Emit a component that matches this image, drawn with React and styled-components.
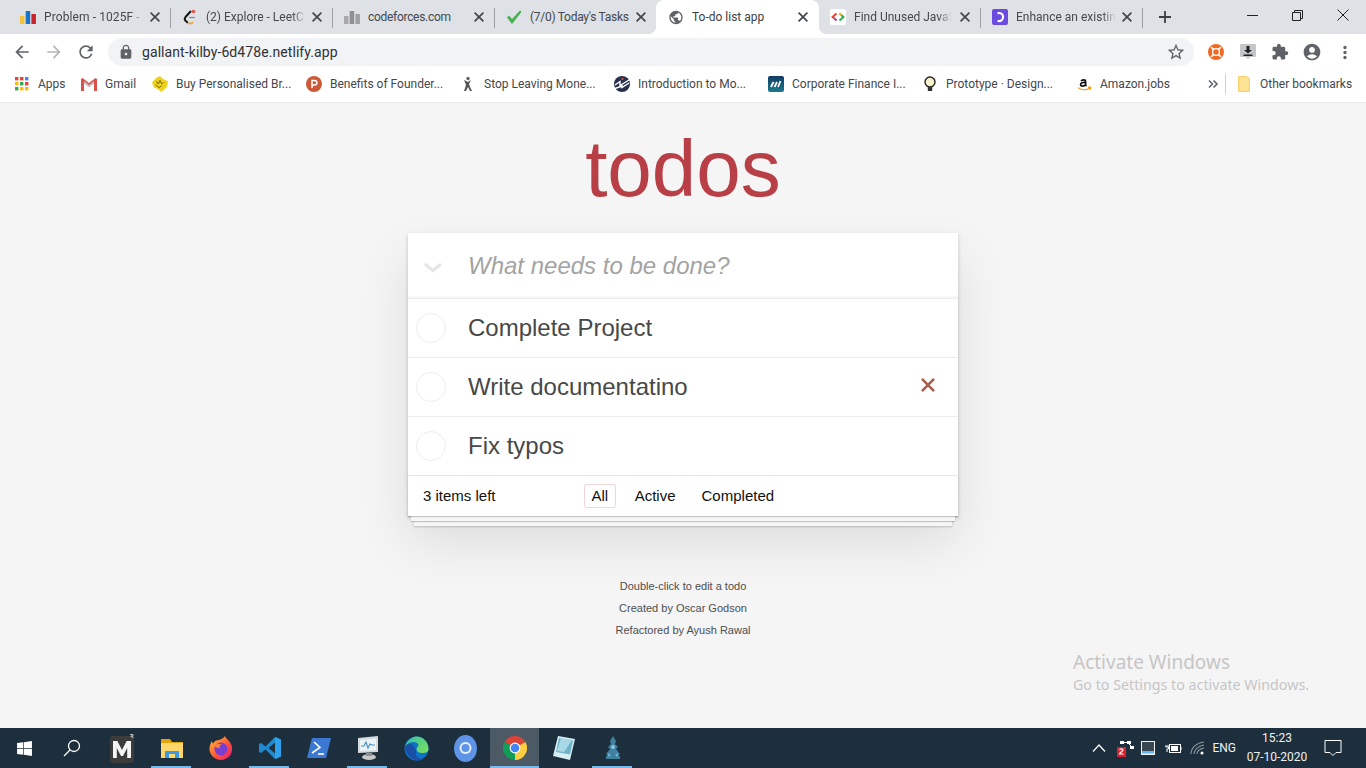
import React from "react";
import styled, { createGlobalStyle } from "styled-components";
import { MdArrowBack, MdArrowForward, MdRefresh, MdLock, MdStarBorder, MdExtension, MdAccountCircle, MdMoreVert, MdPublic } from "react-icons/md";
import { FaWindows } from "react-icons/fa";

const Global = createGlobalStyle`
  html, body { margin: 0; padding: 0; height: 100%; overflow: hidden; }
  body { font-family: "Liberation Sans", Arial, sans-serif; background: #f5f5f5; }
  * { box-sizing: border-box; }
`;

const Screen = styled.div`
  width: 1366px; height: 768px; display: flex; flex-direction: column; overflow: hidden; position: relative;
`;
const Chrome = styled.header`
  flex: none; height: 103px; background: #fff; display: flex; flex-direction: column;
  font-family: Roboto, "Noto Sans", sans-serif;
`;
const TabBar = styled.div`
  height: 34px; background: #dee1e6; display: flex; align-items: stretch; padding-left: 9px;
`;
const Tab = styled.div`
  width: ${p => p.$active ? 163 : 161}px; flex: none; display: flex; align-items: center; padding-left: ${p => p.$active ? 12 : 11}px; position: relative;
  background: ${p => p.$active ? "#fff" : "transparent"};
  border-radius: 8px 8px 0 0;
  color: ${p => p.$active ? "#3c4043" : "#45484c"};
  ${p => p.$active ? `
    margin-left: -1px; margin-right: -1px;
    &::before, &::after { content: ""; position: absolute; bottom: 0; width: 8px; height: 8px; }
    &::before { left: -8px; background: radial-gradient(circle at 0 0, #dee1e6 8px, #fff 8.5px); }
    &::after { right: -8px; background: radial-gradient(circle at 100% 0, #dee1e6 8px, #fff 8.5px); }
  ` : ""}
`;
const TabSep = styled.div`
  width: 1px; flex: none; margin: 8px 0 6px; background: ${p => p.$hidden ? "transparent" : "#9da0a5"};
`;
const Fav = styled.span`
  width: 16px; height: 16px; flex: none; display: flex; align-items: center; justify-content: center;
`;
const TabTitle = styled.span`
  margin-left: 8px; width: 102px; flex: none; overflow: hidden; white-space: nowrap; font-size: 12px; line-height: 16px;
  letter-spacing: ${p => p.$track || 0}px;
  ${p => p.$fade ? `
  -webkit-mask-image: linear-gradient(90deg, #000 ${p.$fade - 14}px, transparent ${p.$fade}px);
  mask-image: linear-gradient(90deg, #000 ${p.$fade - 14}px, transparent ${p.$fade}px);` : ""}
`;
const TabClose = styled.span`
  width: 16px; height: 16px; flex: none; display: flex; margin-left: 1px; color: #44474a;
`;
const NewTab = styled.span`
  width: 20px; height: 20px; margin: 7px 0 0 12px; flex: none; color: #3c4043; display: flex;
`;
const WinControls = styled.div`
  margin-left: auto; display: flex; height: 30px; color: #222;
`;
const WinBtn = styled.span`
  width: 45px; height: 30px; display: flex; align-items: center; justify-content: center;
  &:last-child { width: 46px; }
`;
const Toolbar = styled.div`
  height: 36px; display: flex; align-items: center; padding: 0 0 0 12px; color: #5f6368;
`;
const NavBtn = styled.span`
  width: 20px; height: 20px; margin-right: 12px; display: flex; flex: none; color: ${p => p.$dim ? "#b4b6b9" : "#5f6368"};
  svg { width: 20px; height: 20px; }
`;
const Omnibox = styled.div`
  width: 1086px; height: 28px; flex: none; border-radius: 14px; background: #f1f3f4; display: flex; align-items: center;
  padding: 0 8px 0 10px; font-size: 14px; letter-spacing: .08px; color: #2f3134;
`;
const LockSlot = styled.span`
  width: 16px; height: 16px; display: flex; color: #5f6368; margin-right: 8px; svg { width: 16px; height: 16px; }
`;
const Url = styled.span` flex: 1; white-space: nowrap; `;
const StarSlot = styled.span` width: 20px; height: 20px; display: flex; color: #5f6368; svg { width: 20px; height: 20px; } `;
const ExtSlot = styled.span`
  width: 20px; height: 20px; flex: none; display: flex; align-items: center; justify-content: center; color: #5f6368;
  margin-left: ${p => p.$ml}px;
`;
const Bookmarks = styled.div`
  height: 33px; display: flex; align-items: center; padding: 0 0 4px 14px; border-bottom: 1px solid #e8e8e8;
  font-size: 12px; color: #44474b;
`;
const Bookmark = styled.div`
  width: ${p => p.$w}px; flex: none; display: flex; align-items: center; gap: 8px; white-space: nowrap;
`;
const BmIcon = styled.span`
  width: 16px; height: 16px; flex: none; display: flex; align-items: center; justify-content: center;
`;
const Chevrons = styled.span`
  width: 14px; height: 10px; flex: none; margin-left: 9px; color: #5f6368; display: flex;
`;
const BmSep = styled.span`
  width: 1px; height: 20px; flex: none; background: #d0d2d5; margin: 0 10px 0 5px;
`;

const Main = styled.main`
  flex: 1; min-height: 0; background: #f5f5f5; display: flex; flex-direction: column; align-items: center; position: relative;
`;
const Title = styled.h1`
  margin: 16px 0 0; height: 114px; font-size: 80px; line-height: 100px; font-weight: 400; color: #b83f45; text-align: center;
  font-family: "Liberation Sans", Arial, sans-serif;
`;
const Card = styled.section`
  width: 550px; background: #fff; box-shadow: 0 2px 4px 0 rgba(0,0,0,.2), 0 25px 50px 0 rgba(0,0,0,.1); display: flex; flex-direction: column;
`;
const InputRow = styled.div`
  height: 65px; display: flex; align-items: center; box-shadow: inset 0 -2px 1px rgba(0,0,0,.03);
`;
const ToggleAll = styled.span`
  width: 60px; flex: none; display: flex; justify-content: center; padding: 5px 10px 0 0;
`;
const Placeholder = styled.span`
  font-size: 24px; font-style: italic; color: #a3a3a3; margin-top: 1px;
`;
const Row = styled.div`
  height: 59px; display: flex; align-items: center; border-top: 1px solid #ededed; position: relative;
  &:first-of-type { border-top: 1px solid #e6e6e6; }
`;
const Check = styled.span`
  width: 30px; height: 30px; flex: none; margin-left: 8px; border-radius: 50%; border: 1px solid #ededed;
`;
const RowText = styled.span`
  font-size: 24px; color: #484848; margin-left: 22px; flex: 1;
`;
const Destroy = styled.span`
  width: 22px; height: 22px; flex: none; margin: -5px 19px 0 0; display: flex;
`;
const Foot = styled.footer`
  height: 41px; display: flex; align-items: center; padding: 0 0 0 15px; border-top: 1px solid #e6e6e6;
  font-size: 15px; color: #111; position: relative;
  box-shadow: 0 1px 1px rgba(0,0,0,.2), 0 8px 0 -3px #f6f6f6, 0 9px 1px -3px rgba(0,0,0,.2), 0 16px 0 -6px #f6f6f6, 0 17px 2px -6px rgba(0,0,0,.2);
`;
const Count = styled.span` width: 161px; flex: none; line-height: 22px; margin-top: -1px; `;
const FilterList = styled.div` display: flex; gap: 10px; `;
const Filter = styled.span`
  height: 24px; padding: 0 ${p => p.$on ? 6.5 : 7}px; margin-right: ${p => p.$on ? 1 : 0}px; line-height: 22px; border-radius: 3px; border: 1px solid ${p => p.$on ? "rgba(184,63,69,.22)" : "transparent"};
  color: #111;
`;
const Info = styled.div`
  margin-top: 59px; font-size: 11px; line-height: 22px; color: #4d4d4d; text-align: center;
`;
const Watermark = styled.div`
  position: absolute; left: 1073px; top: 546px; color: #c6c6c6; font-family: "Noto Sans", sans-serif; font-size: 14.25px; line-height: 20px;
`;
const WmTitle = styled.div` font-size: 19px; line-height: 26px; `;

const Taskbar = styled.footer`
  flex: none; height: 40px; background: #1d2f3c; display: flex; align-items: stretch; color: #fff; font-family: Roboto, "Noto Sans", sans-serif;
`;
const TbStart = styled.span` width: 48px; flex: none; display: flex; align-items: center; justify-content: center; svg { width: 17px; height: 17px; } `;
const TbSearch = styled(TbStart)` svg { width: 20px; height: 20px; } `;
const TbApps = styled.div` display: flex; margin-left: 2px; `;
const TbItem = styled.span`
  width: 49px; flex: none; display: flex; align-items: center; justify-content: center; position: relative;
  background: ${p => p.$active ? "#4b5a64" : "transparent"};
  ${p => (p.$open || p.$active) ? `&::after { content: ""; position: absolute; bottom: 0; height: 2px; left: ${p.$active ? 0 : 4}px; right: ${p.$active ? 0 : 5}px; background: #76b9ed; }` : ""}
`;
const Tray = styled.div`
  margin-left: auto; display: flex; align-items: center; font-size: 12px; color: #f0f0f0;
`;
const TrayIcon = styled.span` width: 20px; height: 20px; flex: none; margin-right: ${p => p.$mr ?? 5}px; display: flex; align-items: center; justify-content: center; `;
const Eng = styled.span` margin: 0 6px 0 -1px; `;
const Clock = styled.div` width: 70px; text-align: center; line-height: 19px; font-size: 12px; margin-right: 2px; `;
const Notify = styled.span` width: 48px; display: flex; justify-content: center; margin-right: 9px; margin-left: -5px;`;

const X = ({ s = 16, w = 1.7, c = "currentColor" }) => (
  <svg width={s} height={s} viewBox="0 0 16 16"><path d="M3.6 3.6l8.8 8.8M12.4 3.6l-8.8 8.8" stroke={c} strokeWidth={w} fill="none" /></svg>
);

const BarsFav = ({ colors }) => (
  <svg width="16" height="16" viewBox="0 0 16 16">
    <rect x="0" y="7" width="4.5" height="8" fill={colors[0]} />
    <rect x="5.7" y="2" width="4.5" height="13" fill={colors[1]} />
    <rect x="11.4" y="5" width="4.5" height="10" fill={colors[2]} />
  </svg>
);
const LeetFav = () => (
  <svg width="16" height="16" viewBox="0 0 16 16" fill="none">
    <path d="M9 2L3.500 8c-1 1.200-.8 3 .3 4l2 1.700" stroke="#111" strokeWidth="1.900" />
    <path d="M6 13.900c1.600.9 3.600.9 5.200-.5" stroke="#e9a33b" strokeWidth="1.800" />
    <path d="M7 8.500h6" stroke="#888" strokeWidth="1.200" />
    <circle cx="11.500" cy="2.500" r="1.800" fill="#e0574a" />
  </svg>
);
const CheckFav = () => (
  <svg width="16" height="16" viewBox="0 0 16 16"><path d="M1 8.500l2-2 3 3.500L14 1.500l1.500 1.500L6 15z" fill="#4caf50" /></svg>
);
const CodeFav = () => (
  <svg width="16" height="16" viewBox="0 0 16 16">
    <rect width="16" height="16" rx="2" fill="#fff" />
    <path d="M6.500 4.600L2.600 8l3.900 3.400" fill="none" stroke="#ea4335" strokeWidth="2" />
    <path d="M4.600 9.600l1.900 1.800" fill="none" stroke="#4285f4" strokeWidth="2" />
    <path d="M9.500 4.600L13.400 8l-3.900 3.400" fill="none" stroke="#34a853" strokeWidth="2" />
    <path d="M11.400 6.400L9.500 4.600" fill="none" stroke="#fbbc05" strokeWidth="2" />
  </svg>
);
const PurpleFav = () => (
  <svg width="16" height="16" viewBox="0 0 16 16">
    <rect width="16" height="16" rx="2" fill="#6c4ce0" />
    <path d="M5.500 4.200c3-.8 5.600.8 5.600 3.800s-2.600 4.700-5.600 3.800" fill="none" stroke="#fff" strokeWidth="2.200" />
  </svg>
);
const GridApps = () => (
  <svg width="14" height="14" viewBox="0 0 14 14">
    {[["#ea4335","#ea4335","#4285f4"],["#fbbc05","#34a853","#ea4335"],["#34a853","#fbbc05","#fbbc05"]].map((r, i) =>
      r.map((c, j) => <rect key={`${i}${j}`} x={j * 5} y={i * 5} width="3.4" height="3.4" fill={c} />))}
  </svg>
);
const GmailIcon = () => (
  <svg width="16" height="13" viewBox="0 0 16 13">
    <path d="M0 1v12h3V5l5 4 5-4v8h3V1l-1.500-1L8 5 1.500 0z" fill="#d9534a" />
    <path d="M3 5l5 4 5-4V3L8 7 3 3z" fill="#c4c4c4" />
  </svg>
);
const BuyIcon = () => (
  <svg width="16" height="16" viewBox="0 0 18 18">
    <path d="M0 7l5-5 4-2 3 3 6 3-1 6-4 4-3 2-3-3-5-2z" fill="#eed21f" />
    <path d="M5 6l2 3 2-4 2 4 2-2M4 10l4 3 3-2" stroke="#6d5a10" strokeWidth="1" fill="none" />
  </svg>
);
const PIcon = () => (
  <svg width="16" height="16" viewBox="0 0 16 16">
    <circle cx="8" cy="8" r="8" fill="#cc5a37" />
    <path d="M6 12V4.500h2.600a2.200 2.200 0 010 4.600H6" fill="none" stroke="#fff" strokeWidth="1.500" />
  </svg>
);
const StopIcon = () => (
  <svg width="14" height="16" viewBox="0 0 14 16">
    <circle cx="7" cy="2.500" r="1.700" fill="#666" />
    <path d="M3 4l4 2 3-2-2 4 1 3 2 4h-2l-2-4-2 4H3l2-6z" fill="#555" />
  </svg>
);
const IntroIcon = () => (
  <svg width="16" height="16" viewBox="0 0 16 16">
    <circle cx="8" cy="8" r="8" fill="#27304f" />
    <path d="M1 9l5-3.500v4L15 4M1 12.500l7-2.500v1.500L15 7" stroke="#fff" strokeWidth="1.400" fill="none" />
    <circle cx="8.500" cy="3" r="1" fill="#e0574a" />
  </svg>
);
const CorpIcon = () => (
  <svg width="16" height="16" viewBox="0 0 16 16">
    <defs><linearGradient id="corp" x1="0" y1="0" x2="0" y2="1"><stop offset="0" stopColor="#123a63" /><stop offset="1" stopColor="#1b7a8c" /></linearGradient></defs>
    <rect width="16" height="16" rx="2" fill="url(#corp)" />
    <path d="M3 11l2.500-5M6.500 11L9 6M10 11l2.500-6" stroke="#fff" strokeWidth="1.800" />
  </svg>
);
const BulbIcon = () => (
  <svg width="14" height="16" viewBox="0 0 14 16">
    <circle cx="7" cy="6" r="5" fill="#f7f3cf" stroke="#222" strokeWidth="1.400" />
    <rect x="4.800" y="11" width="4.400" height="4" fill="#333" />
  </svg>
);
const AmazonIcon = () => (
  <svg width="15" height="16" viewBox="0 0 15 16">
    <path d="M8.600 9.600V5.200c0-1.700-3.600-2-4.500 0M8.600 6.400c-3-.2-5 .6-5 2.200 0 1.800 3.700 2.100 5-.3M8.600 8.600c0 .8.500 1.200 1 1.400" fill="none" stroke="#111" strokeWidth="1.700" />
    <path d="M1 11.600c3.600 2.800 8.600 2.800 12 .4M11 11.400l2.600-.2-.4 2.600" fill="none" stroke="#f90" strokeWidth="1.200" />
  </svg>
);
const FolderIcon = () => (
  <svg width="12" height="16" viewBox="0 0 12 16"><path d="M.5.500h8l3 2v13H.5z" fill="#fde293" stroke="#f4cf6b" /></svg>
);
const LifeRing = () => (
  <svg width="16" height="16" viewBox="0 0 16 16">
    <circle cx="8" cy="8" r="8" fill="#ee6a24" />
    <circle cx="8" cy="8" r="3.400" fill="none" stroke="#fff" strokeWidth="1.300" />
    <path d="M3 3l2.600 2.600M13 3l-2.600 2.600M3 13l2.600-2.600M13 13l-2.600-2.600" stroke="#fff" strokeWidth="1.500" />
  </svg>
);
const DownloadExt = () => (
  <svg width="18" height="18" viewBox="0 0 18 18">
    <rect x="1" y="1" width="16" height="13" rx="1" fill="#c4c6c8" />
    <path d="M7.500 3h3v4h2.500L9 10.500 5 7h2.500zM4.500 11.500h9v1.400h-9z" fill="#222" />
    <path d="M7 14h4l-2 2.500z" fill="#c4c6c8" />
  </svg>
);
const ChevronDown = () => (
  <svg width="20" height="12" viewBox="0 0 20 12"><path d="M2 2l8 6.500L18 2" fill="none" stroke="#e6e6e6" strokeWidth="3" /></svg>
);

const tbIcons = {
  m: <svg width="25" height="32" viewBox="0 0 25 32"><rect y="4" width="24" height="27" rx="3" fill="#3c3c3c" /><path d="M3 26V9h4.400L12 18l4.600-9H21v17h-3.800V16l-4.200 8h-2L6.800 16v10z" fill="#f4f4f4" /><path d="M20 2.500h3v1.400h-2v1h2V6" stroke="#ddd" strokeWidth=".8" fill="none" /></svg>,
  folder: <svg width="24" height="24" viewBox="0 0 24 24"><path d="M1 3h9l2 3h11v4H1z" fill="#e5a50a" /><path d="M1 7h22v15H1z" fill="#ffd76a" /><rect x="5" y="15" width="14" height="7" fill="#3d9ae0" /><rect x="9" y="18" width="6" height="4" fill="#ffd76a" /></svg>,
  firefox: <svg width="24" height="26" viewBox="0 0 24 26"><defs><linearGradient id="ff" x1="0" y1="0" x2="1" y2="1"><stop offset="0" stopColor="#ffc13a" /><stop offset=".55" stopColor="#ff5634" /><stop offset="1" stopColor="#e31587" /></linearGradient></defs><path d="M16 1c1 3 6 5 7 11 1 8-5 13-11 13S0 20 .5 13C1 10 2 7 3 6c0 1 .5 2 1 2.500C5 6 8 5 10 5c2-1 5-2 6-4z" fill="url(#ff)" /><circle cx="12" cy="14" r="6.500" fill="#7b3fd0" /><path d="M5 11c2-2 6-3 8-1-3 0-3 2-2 3-3 0-4-1-6-2z" fill="#ff8a2a" /></svg>,
  vscode: <svg width="24" height="24" viewBox="0 0 24 24"><path d="M17 1L7.500 10.500 3 7 1 8v8l2 1 4.500-3.500L17 23l6-2.500v-17z" fill="#1f8ad2" /><path d="M17 6.500L10.500 12 17 17.500z" fill="#1d2f3c" /><path d="M17 1l6 2.500v17L17 23z" fill="#2da1ec" /></svg>,
  ps: <svg width="24" height="22" viewBox="0 0 24 22"><path d="M5 1h19l-5 20H0z" fill="#3b78d4" /><path d="M7 5l6 5.500-8 5.500" fill="none" stroke="#fff" strokeWidth="1.600" /><path d="M11 17h6" stroke="#fff" strokeWidth="1.600" /></svg>,
  monitor: <svg width="24" height="26" viewBox="0 0 24 26"><path d="M2 3l20-2v16L2 18z" fill="#d6dadd" /><path d="M4 5l16-1.500v11.500L4 16z" fill="#eaf3f7" /><path d="M5 11h3l2-4 2 6 2-4 2 1h3" fill="none" stroke="#4a93c4" strokeWidth="1.200" /><ellipse cx="13" cy="22" rx="7" ry="3" fill="#c9c9c9" /><rect x="10" y="18" width="6" height="3" fill="#8f8f8f" /></svg>,
  edge: <svg width="25" height="25" viewBox="0 0 25 25"><defs><linearGradient id="ed" x1="0" y1="0" x2="1" y2="1"><stop offset="0" stopColor="#35c1a0" /><stop offset="1" stopColor="#7fe05f" /></linearGradient></defs><circle cx="12.500" cy="12.500" r="12" fill="#0c74c6" /><path d="M1 11C3 3 10 .5 12.500.5 19 .5 24.500 6 24.500 13c0 3-3 4-6 4-4 0-6-1.500-6-4 0-2 2-2.500 2-4 0-2-3-3.500-6-3C5 6.500 2.500 8 1 11z" fill="url(#ed)" /><path d="M1 11c1 8 7 13.500 13 13.500 2 0 4-.5 5.500-2-6 1-8.500-3-7.500-8C9 6 3 7 1 11z" fill="#1a4fa8" /></svg>,
  chromium: <svg width="23" height="27" viewBox="0 0 23 27"><ellipse cx="11.500" cy="13.500" rx="11.500" ry="13.500" fill="#5f93e6" /><circle cx="11.500" cy="13" r="6" fill="#e8eefb" /><circle cx="11.500" cy="13" r="4" fill="#5f93e6" /></svg>,
  chrome: <svg width="24" height="24" viewBox="0 0 24 24"><path d="M12 12L1.600 6A12 12 0 0122.400 6z" fill="#db4437" /><path d="M12 12L1.600 6A12 12 0 0012 24z" fill="#0f9d58" /><path d="M12 12L22.400 6A12 12 0 0112 24z" fill="#ffcd40" /><circle cx="12" cy="12" r="5.400" fill="#fff" /><circle cx="12" cy="12" r="4.300" fill="#4285f4" /></svg>,
  notepad: <svg width="24" height="26" viewBox="0 0 24 26"><path d="M6 1l17 3-5 21L1 21z" fill="#d7eef5" /><path d="M7 3l14 2.500-3 14L4 17z" fill="#6fb3c8" /><path d="M9 3l11 2-8 12-7-1z" fill="#a9d8e6" /></svg>,
  tara: <svg width="18" height="26" viewBox="0 0 18 26"><path d="M9 1l3 5-1 3 3 3-2 2 4 5-3 2h3v3H2v-3h3l-3-2 4-5-2-2 3-3-1-3z" fill="#3f7f9f" /><circle cx="9" cy="12" r="2" fill="#8cc6dd" /><circle cx="5" cy="20" r="1.500" fill="#6db2cf" /><circle cx="13" cy="20" r="1.500" fill="#6db2cf" /></svg>,
};

const tabs = [
  { t: "Problem - 1025F -", fade: 100, track: .1, i: <BarsFav colors={["#f5c33b", "#1a73c8", "#c7242c"]} /> },
  { t: "(2) Explore - LeetC", fade: 100, i: <LeetFav /> },
  { t: "codeforces.com", track: -.3, i: <BarsFav colors={["#a8a8a8", "#909090", "#a0a0a0"]} /> },
  { t: "(7/0) Today's Tasks", track: -.28, i: <CheckFav /> },
  { t: "To-do list app", i: <MdPublic size={19} color="#5f6368" />, active: true },
  { t: "Find Unused JavaS", fade: 98, i: <CodeFav /> },
  { t: "Enhance an existin", fade: 100, i: <PurpleFav /> },
];
const bookmarks = [
  { t: "Apps", w: 67, i: <GridApps /> },
  { t: "Gmail", w: 71, i: <GmailIcon /> },
  { t: "Buy Personalised Br...", w: 154, i: <BuyIcon /> },
  { t: "Benefits of Founder...", w: 154, i: <PIcon /> },
  { t: "Stop Leaving Mone...", w: 154, i: <StopIcon /> },
  { t: "Introduction to Mo...", w: 154, i: <IntroIcon /> },
  { t: "Corporate Finance I...", w: 154, i: <CorpIcon /> },
  { t: "Prototype · Design...", w: 154, i: <BulbIcon /> },
  { t: "Amazon.jobs", w: 121, i: <AmazonIcon /> },
];
const apps = [
  ["m"], ["folder", "open"], ["firefox"], ["vscode", "open"], ["ps"], ["monitor", "open"],
  ["edge"], ["chromium"], ["chrome", "active"], ["notepad"], ["tara", "open"],
];

export default function App() {
  return (
    <Screen>
      <Global />
      <Chrome>
        <TabBar>
          {tabs.map((t, i) => (
            <React.Fragment key={t.t}>
              <Tab $active={t.active}>
                <Fav>{t.i}</Fav>
                <TabTitle $fade={t.fade} $track={t.track}>{t.t}</TabTitle>
                <TabClose><X /></TabClose>
              </Tab>
              <TabSep $hidden={t.active || tabs[i + 1]?.active} />
            </React.Fragment>
          ))}
          <NewTab><svg width="20" height="20" viewBox="0 0 20 20"><path d="M10 4v12M4 10h12" stroke="currentColor" strokeWidth="1.800" /></svg></NewTab>
          <WinControls>
            <WinBtn><svg width="11" height="11" viewBox="0 0 11 11"><path d="M0 5.500h11" stroke="currentColor" /></svg></WinBtn>
            <WinBtn><svg width="11" height="11" viewBox="0 0 11 11" fill="none" stroke="currentColor"><path d="M.5 2.500h8v8h-8zM2.500 2.500v-2h8v8h-2" /></svg></WinBtn>
            <WinBtn><svg width="12" height="12" viewBox="0 0 12 12"><path d="M.5.5l11 11M11.500.5l-11 11" stroke="currentColor" /></svg></WinBtn>
          </WinControls>
        </TabBar>
        <Toolbar>
          <NavBtn><MdArrowBack /></NavBtn>
          <NavBtn $dim><MdArrowForward /></NavBtn>
          <NavBtn><MdRefresh /></NavBtn>
          <Omnibox>
            <LockSlot><MdLock /></LockSlot>
            <Url>gallant-kilby-6d478e.netlify.app</Url>
            <StarSlot><MdStarBorder /></StarSlot>
          </Omnibox>
          <ExtSlot $ml={12}><LifeRing /></ExtSlot>
          <ExtSlot $ml={12}><DownloadExt /></ExtSlot>
          <ExtSlot $ml={12}><MdExtension size={18} /></ExtSlot>
          <ExtSlot $ml={12}><MdAccountCircle size={24} /></ExtSlot>
          <ExtSlot $ml={13}><MdMoreVert size={21} /></ExtSlot>
        </Toolbar>
        <Bookmarks>
          {bookmarks.map(b => (
            <Bookmark key={b.t} $w={b.w}><BmIcon>{b.i}</BmIcon>{b.t}</Bookmark>
          ))}
          <Chevrons><svg width="14" height="10" viewBox="0 0 14 10" fill="none" stroke="currentColor" strokeWidth="1.500"><path d="M3 1.500L6.500 5 3 8.500M7.500 1.500L11 5 7.500 8.500" /></svg></Chevrons>
          <BmSep />
          <Bookmark $w={130}><BmIcon><FolderIcon /></BmIcon>Other bookmarks</Bookmark>
        </Bookmarks>
      </Chrome>
      <Main>
        <Title>todos</Title>
        <Card>
          <InputRow>
            <ToggleAll><ChevronDown /></ToggleAll>
            <Placeholder>What needs to be done?</Placeholder>
          </InputRow>
          <Row><Check /><RowText>Complete Project</RowText></Row>
          <Row><Check /><RowText>Write documentatino</RowText><Destroy><X s={22} w={1.9} c="#a65d50" /></Destroy></Row>
          <Row><Check /><RowText>Fix typos</RowText></Row>
          <Foot>
            <Count>3 items left</Count>
            <FilterList>
              <Filter $on>All</Filter>
              <Filter>Active</Filter>
              <Filter>Completed</Filter>
            </FilterList>
          </Foot>
        </Card>
        <Info>
          <div>Double-click to edit a todo</div>
          <div>Created by Oscar Godson</div>
          <div>Refactored by Ayush Rawal</div>
        </Info>
        <Watermark>
          <WmTitle>Activate Windows</WmTitle>
          Go to Settings to activate Windows.
        </Watermark>
      </Main>
      <Taskbar>
        <TbStart><FaWindows /></TbStart>
        <TbSearch><svg viewBox="0 0 20 20" fill="none" stroke="#fff" strokeWidth="1.300"><circle cx="12" cy="8" r="5.500" /><path d="M8 12l-6 6" /></svg></TbSearch>
        <TbApps>
          {apps.map(([k, st]) => (
            <TbItem key={k} $open={st === "open"} $active={st === "active"}>{tbIcons[k]}</TbItem>
          ))}
        </TbApps>
        <Tray>
          <TrayIcon $mr={7}><svg width="14" height="8" viewBox="0 0 14 8"><path d="M1 7.500L7 1l6 6.500" fill="none" stroke="#fff" strokeWidth="1.200" /></svg></TrayIcon>
          <TrayIcon $mr={2}>
            <svg width="18" height="18" viewBox="0 0 18 18"><path d="M3 2h4v3H3zM10 2h4v3h-4zM13 7h4v3h-4z" fill="#fff" /><path d="M7 3.500h3M12 5l2 2" stroke="#fff" /><rect y="8" width="9" height="10" fill="#d8202f" /><path d="M2.500 11c.5-1.500 3.500-1.500 3.500 0 0 1.500-3 2-3.500 4h4" fill="none" stroke="#fff" strokeWidth="1.200" /></svg>
          </TrayIcon>
          <TrayIcon><svg width="14" height="14" viewBox="0 0 14 14"><rect width="14" height="14" fill="#f3f3f3" /><rect x="1" y="1" width="12" height="9" fill="#3a4650" /><rect x="1" y="10" width="12" height="2.500" fill="#63b6f0" /></svg></TrayIcon>
          <TrayIcon><svg width="17" height="11" viewBox="0 0 17 11" fill="none" stroke="#fff"><rect x="4.500" y="1.500" width="11" height="8" /><rect x="6" y="3" width="7" height="5" fill="#fff" stroke="none" /><path d="M16 4v3M1 2v2M3 2v2M.5 4h3v2H2v3" /></svg></TrayIcon>
          <TrayIcon><svg width="16" height="14" viewBox="0 0 16 14" fill="none" stroke="#8c969d" strokeWidth="1.100"><path d="M1 13C1 7 6 2 14 1M4 13c0-4 4-8 10-9M7 13c0-3 3-5 7-6" /><circle cx="12" cy="12" r="1.500" fill="#fff" stroke="none" /></svg></TrayIcon>
          <Eng>ENG</Eng>
          <Clock><div>15:23</div><div>07-10-2020</div></Clock>
          <Notify><svg width="18" height="16" viewBox="0 0 18 16" fill="none" stroke="#fff"><path d="M1 .5h16v12h-5l-3 3-3-3H1z" /></svg></Notify>
        </Tray>
      </Taskbar>
    </Screen>
  );
}
